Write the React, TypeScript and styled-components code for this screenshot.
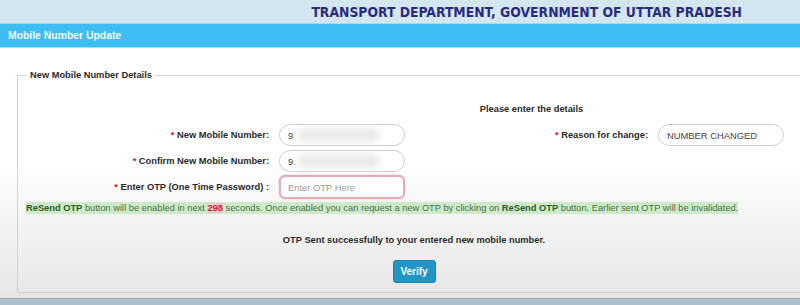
import React from 'react';
import styled, { createGlobalStyle } from 'styled-components';

const GlobalStyle = createGlobalStyle`
	html, body {
		margin: 0;
		padding: 0;
		overflow: hidden;
		background: #ffffff;
	}
	body {
		font-family: 'Liberation Sans', Arial, sans-serif;
	}
`;

const Page = styled.div`
	width: 800px;
	height: 305px;
	display: flex;
	flex-direction: column;
	overflow: hidden;
`;

const TopHeader = styled.div`
	flex-shrink: 0;
	height: 23px;
	background: #d4e6ef;
	border-bottom: 1px solid #b8d2de;
	display: flex;
	align-items: center;
	justify-content: flex-end;
	padding-right: 58px;
`;

const Title = styled.div`
	font-family: 'DejaVu Sans Condensed', 'DejaVu Sans', sans-serif;
	font-stretch: condensed;
	font-size: 13.8px;
	font-weight: 700;
	color: #2b2b7e;
	white-space: nowrap;
	padding-top: 1px;
`;

const SectionBar = styled.div`
	flex-shrink: 0;
	height: 23px;
	background: #3dbdf1;
	border-bottom: 1px solid #a6def6;
	display: flex;
	align-items: center;
	padding-left: 8px;
	font-size: 10.4px;
	font-weight: 700;
	color: #f4fbff;
`;

const Content = styled.div`
	flex: 1;
	min-height: 0;
	padding: 22px 0 0 17px;
	background: linear-gradient(#ffffff 0%, #ffffff 45%, #e6e6e6 100%);
	display: flex;
	flex-direction: column;
`;

const Fieldset = styled.fieldset`
	margin: 0 -30px 0 0;
	padding: 0 8px 9px 8px;
	border: 1px solid #d2d2d2;
	min-width: 0;
`;

const Legend = styled.legend`
	padding: 0 4px;
	font-size: 9.3px;
	font-weight: 700;
	color: #2a2a2a;
`;

const FormGrid = styled.div`
	display: grid;
	grid-template-columns: 243px 126px 233px 126px;
	grid-auto-rows: 22px;
	column-gap: 10px;
	row-gap: 4px;
	align-items: center;
	padding-top: 18px;
`;

const Intro = styled.div`
	grid-column: 3;
	grid-row: 1;
	text-align: center;
	font-size: 9.3px;
	font-weight: 700;
	color: #2a2a2a;
	align-self: start;
	margin-top: 6px;
`;

const Label = styled.label<{ $col?: number; $row: number }>`
	grid-column: ${(p) => p.$col ?? 1};
	grid-row: ${(p) => p.$row};
	text-align: right;
	font-size: 9.3px;
	font-weight: 700;
	color: #2a2a2a;
	white-space: nowrap;
`;

const Star = styled.span`
	color: #d02020;
`;

const FieldCell = styled.div<{ $col?: number; $row: number }>`
	grid-column: ${(p) => p.$col ?? 2};
	grid-row: ${(p) => p.$row};
	position: relative;
	height: 22px;
`;

const TextInput = styled.input<{ $alert?: boolean }>`
	box-sizing: border-box;
	width: 126px;
	height: ${(p) => (p.$alert ? '24px' : '22px')};
	margin: ${(p) => (p.$alert ? '-1px 0 0 0' : '0')};
	padding: 0 0 0 ${(p) => (p.$alert ? '7px' : '8px')};
	border: ${(p) => (p.$alert ? '2px solid #e6a9b8' : '1px solid #cfcfcf')};
	border-radius: ${(p) => (p.$alert ? '6px' : '11px')};
	box-shadow: ${(p) => (p.$alert ? '0 0 2px #f0c8d2' : 'none')};
	background: #fff;
	font-family: 'Liberation Sans', Arial, sans-serif;
	font-size: 9.4px;
	color: #444;
	outline: none;
	&::placeholder {
		color: #9a9a9a;
	}
`;

const Mask = styled.span`
	position: absolute;
	left: 20px;
	top: 5px;
	width: 80px;
	height: 12px;
	background: #e0e0e0;
	filter: blur(4px);
	opacity: 0.8;
	pointer-events: none;
`;

const NoticeRow = styled.div`
	margin-top: 4px;
	font-size: 9.3px;
	line-height: 12px;
	white-space: nowrap;
`;

const Notice = styled.span`
	background: #cdebc8;
	color: #4c6e4c;
	padding: 1px 0;
`;

const Strong = styled.b<{ $tone?: 'red' }>`
	color: ${(p) => (p.$tone === 'red' ? '#c4283c' : '#2f5a2f')};
	background: ${(p) => (p.$tone === 'red' ? '#f2c6cc' : 'transparent')};
`;

const CenterBlock = styled.div`
	display: flex;
	flex-direction: column;
	align-items: center;
	padding-right: 19px;
	margin-top: 21px;
	gap: 15px;
`;

const Success = styled.div`
	font-size: 9.3px;
	font-weight: 700;
	color: #2a2a2a;
`;

const VerifyButton = styled.button`
	width: 43px;
	height: 23px;
	padding: 0;
	border: 1px solid #1b84b3;
	border-radius: 3px;
	background: #2195c5;
	color: #fff;
	font-family: 'Liberation Sans', Arial, sans-serif;
	font-size: 10px;
	font-weight: 700;
	cursor: pointer;
`;

const Footer = styled.div`
	flex: 1;
	background: #e6e6e6;
	margin-left: -17px;
`;

const BottomStrip = styled.div`
	flex-shrink: 0;
	height: 6px;
	background: #aebfcc;
	border-top: 1px solid #97a9b7;
`;

export default function App() {
	return (
		<>
			<GlobalStyle />
			<Page>
				<TopHeader>
					<Title>TRANSPORT DEPARTMENT, GOVERNMENT OF UTTAR PRADESH</Title>
				</TopHeader>
				<SectionBar>Mobile Number Update</SectionBar>
				<Content>
					<Fieldset>
						<Legend>New Mobile Number Details</Legend>
						<FormGrid>
							<Intro>Please enter the details</Intro>

							<Label $row={2}>
								<Star>*</Star> New Mobile Number:
							</Label>
							<FieldCell $row={2}>
								<TextInput readOnly value='9' />
								<Mask />
							</FieldCell>
							<Label $col={3} $row={2}>
								<Star>*</Star> Reason for change:
							</Label>
							<FieldCell $col={4} $row={2}>
								<TextInput readOnly value='NUMBER CHANGED' />
							</FieldCell>

							<Label $row={3}>
								<Star>*</Star> Confirm New Mobile Number:
							</Label>
							<FieldCell $row={3}>
								<TextInput readOnly value='9.' />
								<Mask />
							</FieldCell>

							<Label $row={4}>
								<Star>*</Star> Enter OTP (One Time Password) :
							</Label>
							<FieldCell $row={4}>
								<TextInput $alert placeholder='Enter OTP Here' />
							</FieldCell>
						</FormGrid>

						<NoticeRow>
							<Notice>
								<Strong>ReSend OTP</Strong> button will be enabled in next <Strong $tone='red'>298</Strong> seconds. Once
								enabled you can request a new OTP by clicking on <Strong>ReSend OTP</Strong> button. Earlier sent OTP
								will be invalidated.
							</Notice>
						</NoticeRow>

						<CenterBlock>
							<Success>OTP Sent successfully to your entered new mobile number.</Success>
							<VerifyButton>Verify</VerifyButton>
						</CenterBlock>
					</Fieldset>
					<Footer />
				</Content>
				<BottomStrip />
			</Page>
		</>
	);
}
